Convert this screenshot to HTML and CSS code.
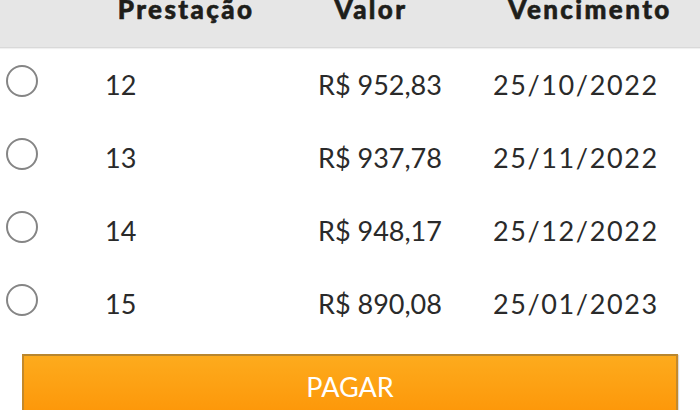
FILE: index.html
```html
<!DOCTYPE html>
<html lang="pt-BR">
<head>
<meta charset="utf-8">
<link rel="stylesheet" href="styles.css">
</head>
<body>
<div class="page">
  <div class="head">
    <div class="hc c-radio"></div>
    <div class="hc c-num">Prestação</div>
    <div class="hc c-val">Valor</div>
    <div class="hc c-date">Vencimento</div>
  </div>
  <div class="rows">
    <div class="row">
      <div class="c-radio"><span class="radio"></span></div>
      <div class="c-num">12</div>
      <div class="c-val">R$ 952,83</div>
      <div class="c-date">25/10/2022</div>
    </div>
    <div class="row">
      <div class="c-radio"><span class="radio"></span></div>
      <div class="c-num">13</div>
      <div class="c-val">R$ 937,78</div>
      <div class="c-date">25/11/2022</div>
    </div>
    <div class="row">
      <div class="c-radio"><span class="radio"></span></div>
      <div class="c-num">14</div>
      <div class="c-val">R$ 948,17</div>
      <div class="c-date">25/12/2022</div>
    </div>
    <div class="row">
      <div class="c-radio"><span class="radio"></span></div>
      <div class="c-num">15</div>
      <div class="c-val">R$ 890,08</div>
      <div class="c-date">25/01/2023</div>
    </div>
  </div>
  <div class="btn-wrap">
    <button class="btn">PAGAR</button>
  </div>
</div>
</body>
</html>
```
FILE: styles.css
```css
html, body {
  margin: 0;
  padding: 0;
  background: #fff;
  overflow: hidden;
}
.page {
  width: 700px;
  height: 410px;
  font-family: "Lato", "Liberation Sans", sans-serif;
  color: #2a2a2a;
}
.head {
  display: grid;
  grid-template-columns: 90px 192px 178px 240px;
  height: 47px;
  background: #e6e6e6;
  border-bottom: 1px solid #d9d9d9;
  box-shadow: 0 1px 1px rgba(0,0,0,0.06);
}
.hc {
  font-weight: 900;
  font-size: 26px;
  line-height: 18px;
  letter-spacing: 2.4px;
  -webkit-text-stroke: 0.6px #1e1e1a;
  color: #1e1e1a;
  text-align: center;
}
.head .c-date { padding-left: 20px; }
.rows {
  display: flex;
  flex-direction: column;
}
.row {
  display: grid;
  grid-template-columns: 90px 228px 175px 207px;
  height: 73px;
  align-items: center;
  font-size: 27px;
  margin-top: -3px;
  margin-bottom: 3px;
}
.row .c-num { padding-left: 15px; padding-top: 5px; }
.row .c-val { padding-top: 5px; }
.row .c-date { padding-top: 5px; letter-spacing: 1.6px; }
.c-radio {
  display: flex;
  align-items: center;
}
.radio {
  box-sizing: border-box;
  width: 32px;
  height: 32px;
  margin-left: 6px;
  margin-top: -1px;
  border: 2px solid #858585;
  border-radius: 50%;
  background: #fff;
}
.btn-wrap {
  padding: 14px 22px 0 22px;
}
.btn {
  display: block;
  width: 100%;
  height: 70px;
  box-sizing: border-box;
  border: 2px solid #c4892a;
  border-top-color: #b8862e;
  background: linear-gradient(#fdab1d, #fd9406);
  color: #fff;
  font-family: "Lato", "Liberation Sans", sans-serif;
  font-size: 27px;
  padding: 0 0 6px 0;
  box-shadow: 1px 1px 1px rgba(0,0,0,0.15);
}
```
